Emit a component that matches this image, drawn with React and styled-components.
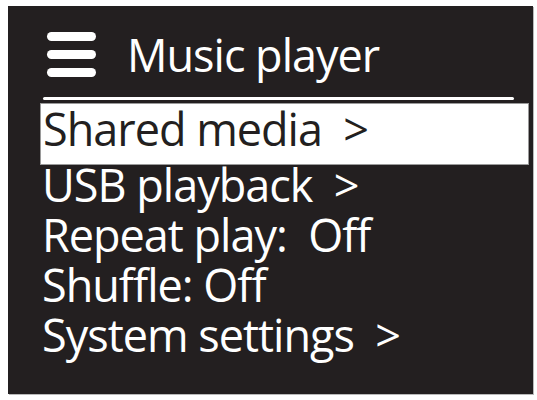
import React from "react";
import styled, { createGlobalStyle } from "styled-components";

const GlobalStyle = createGlobalStyle`
  html, body {
    margin: 0;
    padding: 0;
    background: #ffffff;
  }
  body {
    font-family: "Open Sans", "Noto Sans", sans-serif;
  }
`;

const Page = styled.div`
  width: 537px;
  height: 400px;
  padding: 6px 0 0 8px;
  box-sizing: border-box;
`;

const Screen = styled.div`
  width: 525px;
  height: 388px;
  box-sizing: border-box;
  background: #231f20;
  box-shadow: 1px 1px 0 #b9b9b9;
  padding: 26px 4px 0 32px;
  display: flex;
  flex-direction: column;
  color: #ffffff;
`;

const Header = styled.div`
  display: flex;
  align-items: flex-start;
  gap: 31px;
  padding-left: 7px;
  height: 46px;
`;

const MenuIcon = styled.div`
  display: flex;
  flex-direction: column;
  gap: 9px;
  width: 49px;
`;

const MenuBar = styled.span`
  display: block;
  height: 9px;
  border-radius: 5px;
  background: #ffffff;
`;

const Title = styled.h1`
  margin: 0;
  font-size: 45px;
  line-height: 45px;
  font-weight: 400;
  letter-spacing: -1px;
`;

const Divider = styled.div`
  height: 3px;
  margin: 19px 15px 3px 3px;
  background: #ffffff;
  border-radius: 2px;
`;

const Item = styled.div`
  font-size: 45px;
  line-height: 50px;
  letter-spacing: -1px;
  height: ${(p) => (p.$selected ? "62px" : "50px")};
  box-sizing: border-box;
  padding-left: 2px;
  white-space: pre;
  background: ${(p) => (p.$selected ? "#ffffff" : "transparent")};
  color: ${(p) => (p.$selected ? "#231f20" : "#ffffff")};
  border: ${(p) => (p.$selected ? "1px solid #9a9a9a" : "none")};
  margin-bottom: ${(p) => (p.$selected ? "-5px" : "0")};
`;

const items = [
  "Shared media  >",
  "USB playback  >",
  "Repeat play:  Off",
  "Shuffle: Off",
  "System settings  >",
];

export default function App() {
  return (
    <>
      <GlobalStyle />
      <Page>
        <Screen>
          <Header>
            <MenuIcon>
              <MenuBar />
              <MenuBar />
              <MenuBar />
            </MenuIcon>
            <Title>Music player</Title>
          </Header>
          <Divider />
          {items.map((label, i) => (
            <Item key={label} $selected={i === 0}>
              {label}
            </Item>
          ))}
        </Screen>
      </Page>
    </>
  );
}
